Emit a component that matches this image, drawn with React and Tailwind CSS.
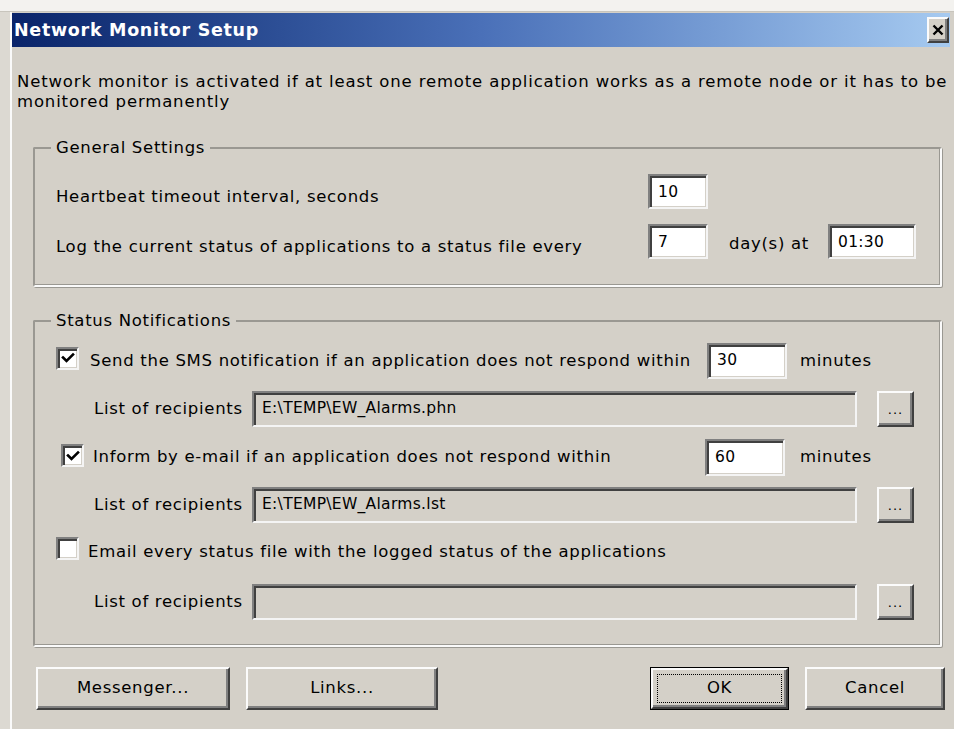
import React from "react";

const sunken =
  "border-2 border-t-[#808080] border-l-[#808080] border-b-[#f4f4f4] border-r-[#f4f4f4] shadow-[inset_2px_2px_0_#404040,inset_-1px_-1px_0_#d4d0c8]";

const raised =
  "border-2 border-t-[#fbfbfb] border-l-[#fbfbfb] border-b-[#404040] border-r-[#404040] shadow-[inset_-2px_-2px_0_#808080] bg-[#d4d0c8]";

function TextBox({ value, className, gray }) {
  return (
    <div
      className={`${sunken} ${gray ? "bg-[#d4d0c8]" : "bg-white"} flex items-center pl-[8px] text-[15.5px] tracking-[0.3px] whitespace-nowrap ${className}`}
    >
      {value}
    </div>
  );
}

function CheckBox({ checked, className }) {
  return (
    <div className={`${sunken} bg-white w-[23px] h-[23px] flex items-center justify-center shrink-0 ${className}`}>
      {checked && (
        <svg width="14" height="14" viewBox="0 0 14 14">
          <path d="M2 6.5 L5.5 10 L12 3.5" fill="none" stroke="#000" strokeWidth="2.6" strokeLinecap="square" />
        </svg>
      )}
    </div>
  );
}

function Browse() {
  return (
    <div className={`${raised} w-[37px] h-[36px] flex items-end justify-center pb-[9px] text-[13px] leading-none tracking-[1px]`}>
      ...
    </div>
  );
}

function Group({ title, className, children }) {
  return (
    <fieldset
      className={`border-2 border-t-[#9a9892] border-l-[#9a9892] border-b-[#fafafa] border-r-[#fafafa] shadow-[inset_-1px_-1px_0_#9a9892,1px_1px_0_#9a9892] rounded-[2px] ${className}`}
    >
      <legend className="ml-[16px] px-[5px] bg-[#d4d0c8] leading-[20px]">{title}</legend>
      {children}
    </fieldset>
  );
}

function RecipientsRow({ value, className }) {
  return (
    <div className={`flex items-center ${className}`}>
      <span className="w-[217px] pl-[59px] shrink-0 whitespace-nowrap">List of recipients</span>
      <TextBox value={value} gray className="w-[605px] h-[36px]" />
      <div className="ml-[20px]">
        <Browse />
      </div>
    </div>
  );
}

export default function App() {
  return (
    <div
      className="w-[954px] h-[729px] overflow-hidden bg-[#d4d0c8] flex flex-col text-black text-[16.5px] tracking-[0.7px]"
      style={{ fontFamily: '"DejaVu Sans", "Liberation Sans", sans-serif' }}
    >
      {/* outer window frame */}
      <div className="h-[12px] bg-[#f3f2ef] border-b border-[#c8c5bd] shrink-0" />
      <div className="flex flex-1">
        <div className="w-[12px] bg-[#dcd9d2] border-r-2 border-[#fafafa] shrink-0" />
        <div className="flex-1 flex flex-col">
          {/* title bar */}
          <div className="h-[34px] mr-[4px] mt-[1px] bg-gradient-to-r from-[#0a246a] via-[#4a70b8] to-[#a6caf0] flex items-center justify-between pl-[2px] pr-[1px]">
            <span className="text-white font-bold text-[17.5px] tracking-[0.7px]">Network Monitor Setup</span>
            <div className={`${raised} w-[22px] h-[26px] flex items-center justify-center`}>
              <svg width="12" height="12" viewBox="0 0 12 12">
                <path d="M1.5 1.5 L10.5 10.5 M10.5 1.5 L1.5 10.5" stroke="#000" strokeWidth="2.4" />
              </svg>
            </div>
          </div>

          {/* body */}
          <div className="flex-1 flex flex-col">
            <p className="mt-[25px] pl-[5px] leading-[20px] pr-[2px] whitespace-nowrap tracking-[0.85px]">
              Network monitor is activated if at least one remote application works as a remote node or it has to be
              <br />
              monitored permanently
            </p>

            <Group title="General Settings" className="ml-[21px] w-[909px] h-[149px] mt-[26px]">
              <div className="flex items-center h-[35px] mt-[16px]">
                <span className="w-[613px] pl-[21px] pt-[11px]">Heartbeat timeout interval, seconds</span>
                <TextBox value="10" className="w-[60px] h-[35px] pt-[3px]" />
              </div>
              <div className="flex items-center h-[35px] mt-[15px]">
                <span className="w-[613px] pl-[21px] pt-[11px] whitespace-nowrap">
                  Log the current status of applications to a status file every
                </span>
                <TextBox value="7" className="w-[60px] h-[35px] pt-[3px]" />
                <span className="ml-[21px] w-[99px] pt-[6px]">day(s) at</span>
                <TextBox value="01:30" className="w-[88px] h-[35px] pt-[3px]" />
              </div>
            </Group>

            <Group title="Status Notifications" className="ml-[21px] w-[909px] h-[336px] mt-[24px]">
              <div className="flex items-center h-[36px] mt-[12px]">
                <CheckBox checked className="ml-[21px] mt-[-6px]" />
                <span className="ml-[11px] w-[617px] whitespace-nowrap">
                  Send the SMS notification if an application does not respond within
                </span>
                <TextBox value="30" className="w-[80px] h-[36px]" />
                <span className="ml-[13px]">minutes</span>
              </div>
              <RecipientsRow value="E:\TEMP\EW_Alarms.phn" className="h-[36px] mt-[12px]" />
              <div className="flex items-center h-[37px] mt-[12px]">
                <CheckBox checked className="ml-[26px] mt-[-4px]" />
                <span className="ml-[9px] w-[612px] whitespace-nowrap">
                  Inform by e-mail if an application does not respond within
                </span>
                <TextBox value="60" className="w-[80px] h-[37px]" />
                <span className="ml-[15px]">minutes</span>
              </div>
              <RecipientsRow value="E:\TEMP\EW_Alarms.lst" className="h-[36px] mt-[11px]" />
              <div className="flex items-center h-[26px] mt-[12px]">
                <CheckBox className="ml-[21px]" />
                <span className="ml-[9px] pt-[8px] whitespace-nowrap">
                  Email every status file with the logged status of the applications
                </span>
              </div>
              <RecipientsRow value="" className="h-[34px] mt-[24px]" />
            </Group>

            {/* dialog buttons */}
            <div className="flex items-center mt-[20px] h-[43px]">
              <div className={`${raised} ml-[24px] w-[194px] h-[43px] flex items-center justify-center`}>
                Messenger...
              </div>
              <div className={`${raised} ml-[16px] w-[192px] h-[43px] flex items-center justify-center`}>
                Links...
              </div>
              <div className="ml-[212px] w-[139px] h-[43px] border border-black">
                <div className={`${raised} w-full h-full flex items-center justify-center p-[4px]`}>
                  <div className="w-full h-full border border-dotted border-black flex items-center justify-center">
                    OK
                  </div>
                </div>
              </div>
              <div className={`${raised} ml-[16px] w-[140px] h-[43px] flex items-center justify-center`}>
                Cancel
              </div>
            </div>
          </div>
        </div>
      </div>
    </div>
  );
}
